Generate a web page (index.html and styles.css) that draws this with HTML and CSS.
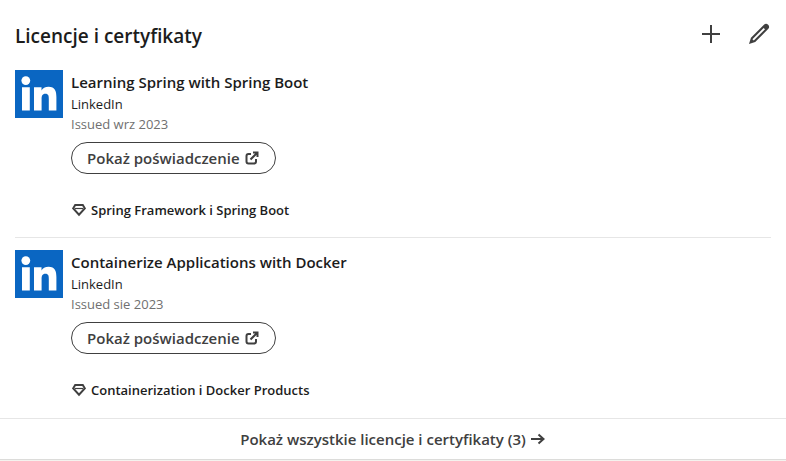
FILE: index.html
```html
<!DOCTYPE html>
<html lang="pl">
<head>
<meta charset="utf-8">
<meta name="viewport" content="width=device-width, initial-scale=1">
<title>Licencje i certyfikaty</title>
<link rel="stylesheet" href="styles.css">
</head>
<body>
<svg class="sprite" aria-hidden="true">
  <symbol id="logo" viewBox="0 0 48 48">
    <rect width="48" height="48" fill="#0a66c2"/>
    <g fill="#fff">
      <circle cx="10.800" cy="10.600" r="4.400"/>
      <path d="M7 17.200h7.800v23.400H7zM19 17.200h7.500v3.200c1.100-2 3.600-3.700 7.100-3.700 6.400 0 7.800 4.500 7.800 10.600v13.300h-7.600V29c0-2.700-.2-5.200-3.400-5.200s-3.800 2.300-3.800 5.200v11.600H19z"/>
    </g>
  </symbol>
  <symbol id="external" viewBox="0 0 16 16">
    <path d="M7 4H4.500Q2.500 4 2.500 6v5.500q0 2 2 2H10q2 0 2-2V9M6.500 9.500 13 3M9 2.500h4.500V7" fill="none" stroke="currentColor" stroke-width="2"/>
  </symbol>
  <symbol id="gem" viewBox="0 0 16 16">
    <path d="M4.200 3h7.600l2 3.300L8 12.700 2.200 6.300z" fill="none" stroke="currentColor" stroke-width="2"/>
    <path d="M4 6.500h8" stroke="currentColor" stroke-width="1.200"/>
  </symbol>
</svg>
<main class="card">
  <header class="card-header">
    <h2 class="card-title">Licencje i certyfikaty</h2>
    <div class="actions">
      <button class="icon-button" type="button" aria-label="Dodaj">
        <svg class="icon-large" viewBox="0 0 24 24" aria-hidden="true"><path d="M3 12h18M12 3v18" fill="none" stroke="currentColor" stroke-width="2"/></svg>
      </button>
      <button class="icon-button" type="button" aria-label="Edytuj">
        <svg class="icon-large" viewBox="0 0 24 24" aria-hidden="true"><path fill="currentColor" fill-rule="evenodd" d="M21.130 2.860a3 3 0 0 0-4.170 0l-13 13L2 22l6.190-2L21.130 7a3 3 0 0 0 0-4.160zM6.770 18.570l-1.350-1.350L16.640 6 18 7.350z"/></svg>
      </button>
    </div>
  </header>
  <ul class="list">
    <li class="item">
      <svg class="logo" role="img" aria-label="LinkedIn"><use href="#logo"/></svg>
      <div class="details">
        <h3 class="name">Learning Spring with Spring Boot</h3>
        <p class="issuer">LinkedIn</p>
        <p class="date">Issued wrz 2023</p>
        <button class="credential" type="button">Pokaż poświadczenie <svg class="icon" aria-hidden="true"><use href="#external"/></svg></button>
        <p class="skills"><svg class="icon" aria-hidden="true"><use href="#gem"/></svg>Spring Framework i Spring Boot</p>
      </div>
    </li>
    <li class="item">
      <svg class="logo" role="img" aria-label="LinkedIn"><use href="#logo"/></svg>
      <div class="details">
        <h3 class="name">Containerize Applications with Docker</h3>
        <p class="issuer">LinkedIn</p>
        <p class="date">Issued sie 2023</p>
        <button class="credential" type="button">Pokaż poświadczenie <svg class="icon" aria-hidden="true"><use href="#external"/></svg></button>
        <p class="skills"><svg class="icon" aria-hidden="true"><use href="#gem"/></svg>Containerization i Docker Products</p>
      </div>
    </li>
  </ul>
  <a class="show-all" href="#">Pokaż wszystkie licencje i certyfikaty (3)
    <svg class="icon" viewBox="0 0 16 16" aria-hidden="true"><path d="M1 8h12M8.500 3.500 13.500 8l-5 4.500" fill="none" stroke="currentColor" stroke-width="2"/></svg>
  </a>
</main>
</body>
</html>
```
FILE: styles.css
```css
* {
  box-sizing: border-box;
}

body {
  margin: 0;
  background: #f4f2ee;
  color: #1c1c1c;
  font-family: "Segoe UI", "Open Sans", "Noto Sans", sans-serif;
  font-size: 13px;
  line-height: 20px;
}

h2,
h3,
p,
ul {
  margin: 0;
  padding: 0;
}

button {
  font: inherit;
  background: none;
  cursor: pointer;
}

.sprite {
  position: absolute;
  width: 0;
  height: 0;
}

.card {
  background: #fff;
  border-bottom: 1px solid #dcdcda;
}

.card-header {
  display: flex;
  align-items: center;
  justify-content: space-between;
  padding: 14px 15px 16px;
}

.card-title {
  padding-top: 4px;
  font-size: 19px;
  line-height: 24px;
  font-weight: 600;
}

.actions {
  display: flex;
  gap: 8px;
  margin-right: -8px;
}

.icon-button {
  display: flex;
  align-items: center;
  justify-content: center;
  width: 40px;
  height: 40px;
  padding: 0;
  border: 0;
  color: #404040;
}

.icon-large {
  width: 24px;
  height: 24px;
}

.icon {
  flex: none;
  width: 16px;
  height: 16px;
  color: #404040;
}

.list {
  padding: 0 15px 1px;
  list-style: none;
}

.item {
  display: flex;
  gap: 8px;
  padding-bottom: 17px;
}

.item + .item {
  padding-top: 12px;
  border-top: 1px solid #e6e6e6;
}

.logo {
  flex: none;
  width: 48px;
  height: 48px;
}

.name {
  font-size: 15px;
  line-height: 24px;
  font-weight: 600;
}

.date {
  color: #707070;
}

.credential {
  display: flex;
  align-items: center;
  gap: 4px;
  height: 32px;
  margin-top: 8px;
  padding: 0 15px;
  border: 1px solid #404040;
  border-radius: 16px;
  color: #404040;
  font-size: 15px;
  font-weight: 600;
}

.skills {
  display: flex;
  align-items: center;
  gap: 4px;
  margin-top: 26px;
  font-weight: 600;
}

.show-all {
  display: flex;
  align-items: center;
  justify-content: center;
  gap: 4px;
  padding: 10px 15px;
  border-top: 1px solid #e6e6e6;
  color: #404040;
  font-size: 15px;
  font-weight: 600;
  text-decoration: none;
}
```
